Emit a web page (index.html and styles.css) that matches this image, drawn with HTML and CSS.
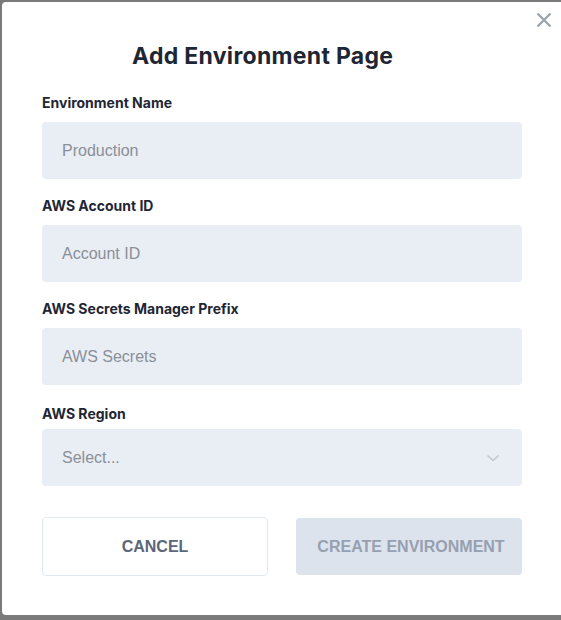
FILE: index.html
```html
<!DOCTYPE html>
<html>
<head>
<meta charset="utf-8">
<link rel="stylesheet" href="styles.css">
</head>
<body>
<div class="modal">
  <button class="close" aria-label="Close">
    <svg width="16" height="16" viewBox="0 0 16 16"><path d="M1.5 1.5 L14.5 14.5 M14.5 1.5 L1.5 14.5" stroke="#9aa3b0" stroke-width="2.3" stroke-linecap="butt"/></svg>
  </button>
  <h1 class="title">Add Environment Page</h1>
  <form class="form">
    <div class="field">
      <label class="label">Environment Name</label>
      <div class="input">Production</div>
    </div>
    <div class="field">
      <label class="label">AWS Account ID</label>
      <div class="input">Account ID</div>
    </div>
    <div class="field">
      <label class="label">AWS Secrets Manager Prefix</label>
      <div class="input">AWS Secrets</div>
    </div>
    <div class="field field-select">
      <label class="label">AWS Region</label>
      <div class="input select">
        <span>Select...</span>
        <svg width="14" height="8" viewBox="0 0 14 8"><path d="M1.5 1.5 L7 6.5 L12.5 1.5" fill="none" stroke="#c4c8ce" stroke-width="1.6"/></svg>
      </div>
    </div>
    <div class="actions">
      <div class="btn btn-cancel">CANCEL</div>
      <div class="btn btn-create">CREATE ENVIRONMENT</div>
    </div>
  </form>
</div>
</body>
</html>
```
FILE: styles.css
```css
html, body {
  margin: 0;
  padding: 0;
  background: #7a7a7a;
  height: 620px;
  overflow: hidden;
}
body {
  padding: 2px 0 0 2px;
  box-sizing: border-box;
}
.modal {
  position: relative;
  background: #fff;
  width: 566px;
  height: 613px;
  border-radius: 4px;
  box-sizing: border-box;
  padding: 40px 0 0 40px;
  font-family: Inter, "Noto Sans", sans-serif;
}
.close {
  position: absolute;
  top: 10px;
  left: 534px;
  padding: 0;
  border: 0;
  background: none;
  width: 16px;
  height: 16px;
  display: flex;
}
.title {
  margin: 0 0 0 90px;
  font-size: 23px;
  font-weight: 700;
  color: #1f2633;
  line-height: 28px;
  letter-spacing: 0.3px;
}
.form {
  width: 480px;
  margin-top: 24px;
  display: flex;
  flex-direction: column;
}
.field {
  display: flex;
  flex-direction: column;
  margin-bottom: 18px;
}
.label {
  font-size: 14px;
  font-weight: 700;
  color: #1f2633;
  line-height: 18px;
  margin-bottom: 10px;
}
.input {
  height: 57px;
  background: #e9eef5;
  border-radius: 4px;
  display: flex;
  align-items: center;
  padding: 0 20px;
  font-family: "Liberation Sans", Arial, sans-serif;
  font-size: 16px;
  color: #8a8f98;
}
.field-select {
  margin-top: 2px;
}
.field-select .label {
  margin-bottom: 6px;
}
.select {
  justify-content: space-between;
  padding-right: 22px;
}
.actions {
  display: flex;
  gap: 28px;
  margin-top: 13px;
}
.btn {
  width: 226px;
  box-sizing: border-box;
  display: flex;
  align-items: center;
  justify-content: center;
  font-family: "Liberation Sans", Arial, sans-serif;
  font-weight: 700;
  font-size: 16px;
  border-radius: 4px;
}
.btn-cancel {
  height: 59px;
  border: 1px solid #e2e8f0;
  color: #5b6678;
}
.btn-create {
  height: 57px;
  margin-top: 1px;
  background: #dde3ed;
  color: #95a0b0;
  padding-left: 4px;
}
```
